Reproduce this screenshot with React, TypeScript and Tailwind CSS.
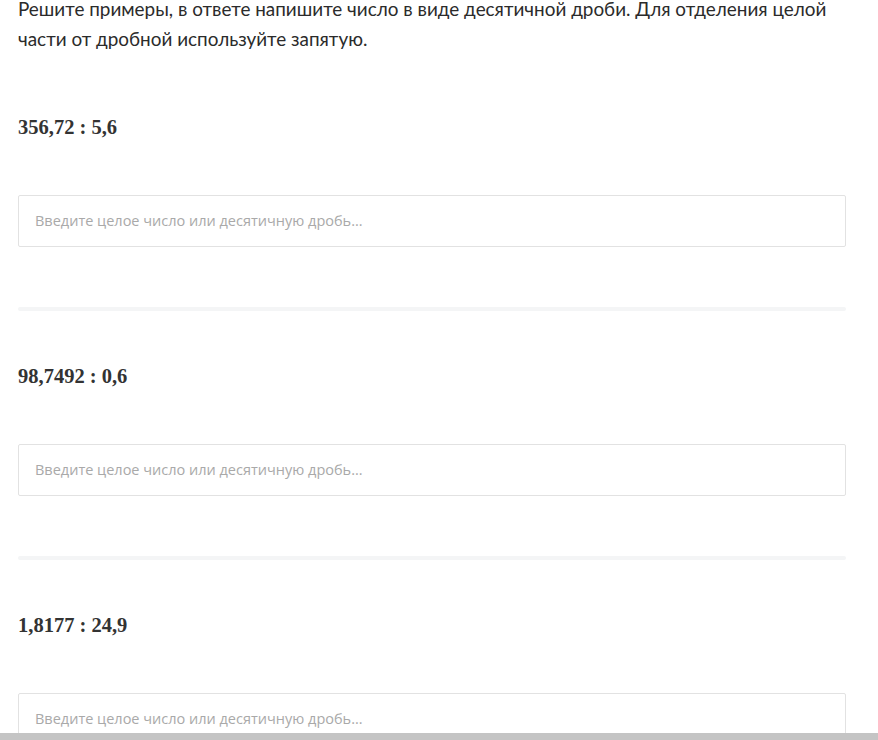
const problems = ["356,72 : 5,6", "98,7492 : 0,6", "1,8177 : 24,9"];

const Problem = ({ text, first, last }: { text: string; first?: boolean; last?: boolean }) => {
  return (
    <div>
      <div
        className={`${first ? "mt-[58px]" : "mt-[50px]"} h-[30px] font-['Liberation_Serif',serif] text-[20.5px] font-bold leading-[30px] text-[#333]`}
      >
        {text}
      </div>
      <div className="mt-[53px] flex h-[52px] items-center rounded-[2px] border border-[#e2e2e2] bg-white px-4">
        <input
          type="text"
          placeholder="Введите целое число или десятичную дробь..."
          className="w-full bg-transparent font-['Open_Sans',sans-serif] text-[14.5px] text-[#333] outline-none placeholder:text-[#a9a9a9]"
        />
      </div>
      {!last && <div className="mt-[60px] h-[4px] rounded-full bg-[#f4f5f6]" />}
    </div>
  );
};

const App = () => {
  return (
    <div className="flex h-[740px] flex-col overflow-hidden bg-white">
      <div className="flex-1 overflow-hidden px-[18px]">
        <div className="w-[828px]">
          <p className="-mt-[6px] font-['Lato',sans-serif] text-[18.9px] leading-[30px] text-[#2b2b2b]">
            Решите примеры, в ответе напишите число в виде десятичной дроби. Для отделения целой
            <br />
            части от дробной используйте запятую.
          </p>
          {problems.map((p, i) => (
            <Problem key={p} text={p} first={i === 0} last={i === problems.length - 1} />
          ))}
        </div>
      </div>
      <div className="h-[7px] bg-[#c4c4c4]" />
    </div>
  );
};

export default App;
